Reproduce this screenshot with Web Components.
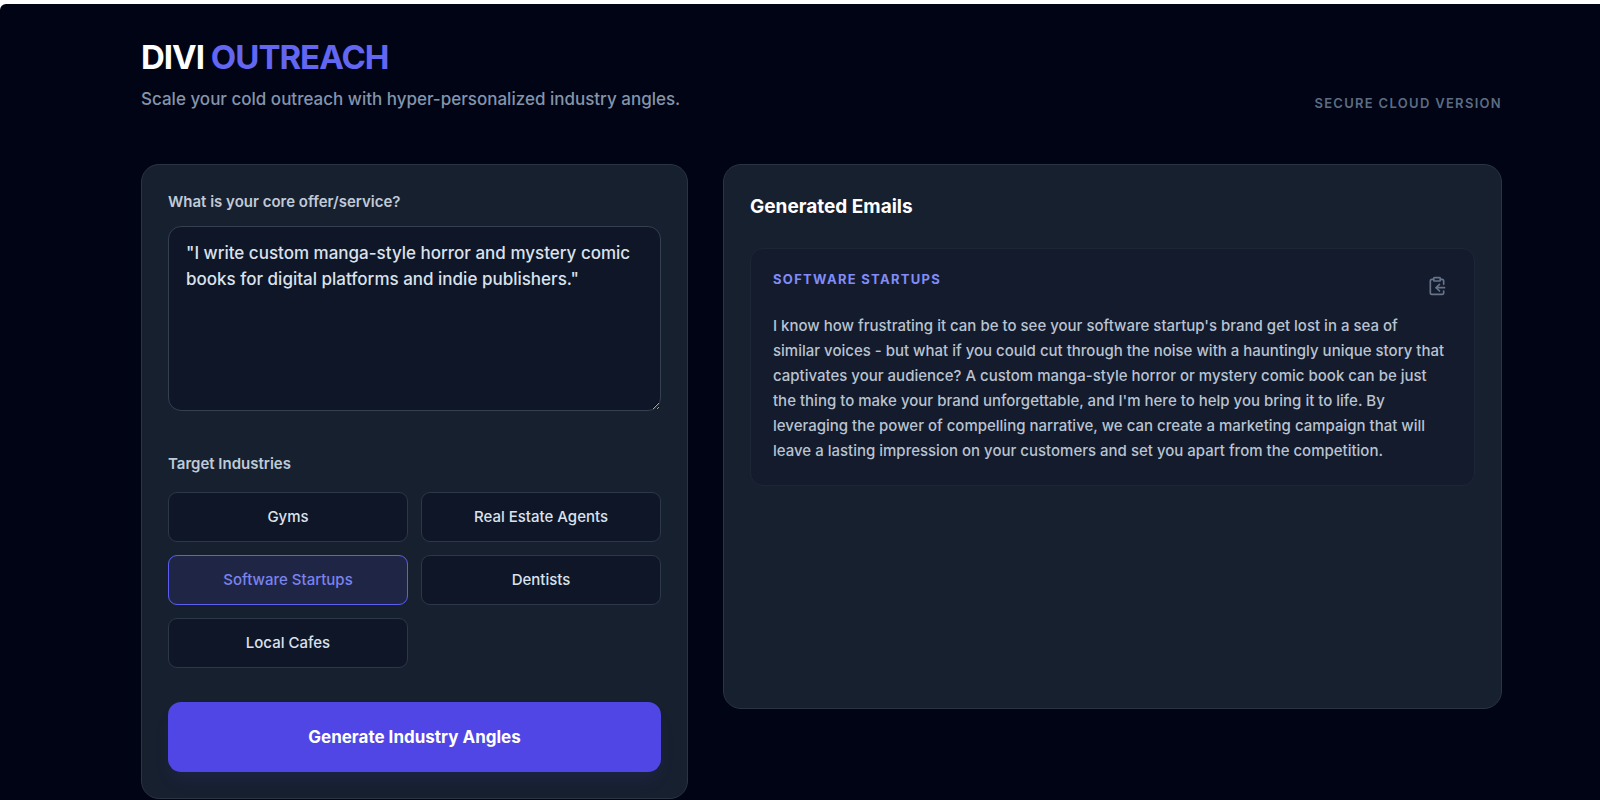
<!DOCTYPE html>
<html lang="en">
<head>
<meta charset="utf-8">
<meta name="viewport" content="width=device-width, initial-scale=1">
<title>Divi Outreach</title>
<style>
  html { background: #ffffff; }
  body {
    margin: 0;
    padding-top: 4px;
    font-family: Inter, "Liberation Sans", sans-serif;
    font-size: 15px;
    line-height: 24px;
    color: #dbe2ec;
    overflow: hidden;
  }
</style>
</head>
<body>
<outreach-app></outreach-app>

<script>
const define = (name, html, setup) => {
  const template = document.createElement('template');
  template.innerHTML = html;
  customElements.define(name, class extends HTMLElement {
    constructor() {
      super();
      this.attachShadow({ mode: 'open' }).append(template.content.cloneNode(true));
    }
    connectedCallback() {
      if (setup) setup(this, this.shadowRoot);
    }
  });
};

define('page-header', `
  <style>
    :host { display: block; }
    header { display: flex; justify-content: space-between; align-items: flex-end; }
    h1 { margin: 0 0 9px; font-size: 33px; line-height: 40px; font-weight: 700; letter-spacing: -1px; color: #fff; }
    .accent { color: #6366f1; }
    p { margin: 0; font-size: 17px; line-height: 27px; font-weight: 500; color: #8494ab; }
    .badge { font-size: 13px; line-height: 20px; font-weight: 600; letter-spacing: 0.1em; text-transform: uppercase; color: #5c6c83; }
  </style>
  <header>
    <div>
      <h1>DIVI <span class="accent">OUTREACH</span></h1>
      <p><slot name="tagline"></slot></p>
    </div>
    <div class="badge"><slot name="badge"></slot></div>
  </header>`);

define('panel-card', `
  <style>
    :host {
      display: block;
      box-sizing: border-box;
      padding: 26px;
      border: 1px solid #2b3443;
      border-radius: 18px;
      background: #17202f;
    }
  </style>
  <slot></slot>`);

define('offer-field', `
  <style>
    :host { display: block; }
    label { display: block; margin-bottom: 13px; font-size: 15px; line-height: 22px; font-weight: 600; color: #c0cad7; }
    textarea {
      display: block;
      box-sizing: border-box;
      width: 100%;
      height: 185px;
      margin: 0;
      padding: 13px 17px;
      border: 1px solid #343f50;
      border-radius: 13px;
      background: #0e1628;
      color: #dbe2ec;
      font: inherit;
      font-size: 17px;
      font-weight: 500;
      line-height: 26px;
      resize: vertical;
      outline: none;
    }
  </style>
  <label for="offer">What is your core offer/service?</label>
  <textarea id="offer">"I write custom manga-style horror and mystery comic books for digital platforms and indie publishers."</textarea>`);

define('industry-option', `
  <style>
    :host { display: block; }
    button {
      box-sizing: border-box;
      width: 100%;
      height: 50px;
      padding: 0 16px;
      border: 1px solid #2c3748;
      border-radius: 9px;
      background: #0e1628;
      color: #dbe2ec;
      font: inherit;
      font-weight: 500;
      cursor: pointer;
    }
    button[aria-pressed="true"] { border-color: #5b5ef0; background: #1f2645; color: #7b83ee; }
  </style>
  <button type="button" aria-pressed="false"><slot></slot></button>`,
  (host, root) => {
    const button = root.querySelector('button');
    const sync = () => button.setAttribute('aria-pressed', String(host.hasAttribute('selected')));
    button.addEventListener('click', () => { host.toggleAttribute('selected'); sync(); });
    sync();
  });

define('industry-picker', `
  <style>
    :host { display: block; }
    .title { margin: 0 0 17px; font-size: 15px; line-height: 22px; font-weight: 600; color: #c0cad7; }
    .grid { display: grid; grid-template-columns: 1fr 1fr; gap: 13px; }
  </style>
  <div role="group" aria-labelledby="title">
    <p class="title" id="title">Target Industries</p>
    <div class="grid"><slot></slot></div>
  </div>`);

define('primary-button', `
  <style>
    :host { display: block; }
    button {
      display: block;
      width: 100%;
      height: 70px;
      border: 0;
      border-radius: 13px;
      background: #4f46e5;
      color: #fff;
      font: inherit;
      font-size: 17px;
      font-weight: 700;
      box-shadow: 0 11px 17px -3px rgba(79, 70, 229, 0.1);
      cursor: pointer;
    }
  </style>
  <button type="button"><slot></slot></button>`);

define('email-card', `
  <style>
    :host {
      display: block;
      padding: 22px;
      border: 1px solid #1d2637;
      border-radius: 13px;
      background: #141b2c;
    }
    .head { display: flex; justify-content: space-between; align-items: flex-start; margin-bottom: 12px; }
    h3 { margin: 0; font-size: 13px; line-height: 16px; font-weight: 700; letter-spacing: 0.1em; text-transform: uppercase; color: #818cf8; }
    button { display: block; padding: 5px; border: 0; background: none; color: #64748b; cursor: pointer; }
    svg { display: block; width: 20px; height: 20px; }
    p { margin: 0; padding-right: 4px; font-size: 15px; line-height: 25px; font-weight: 500; color: #b9c3d1; }
  </style>
  <article>
    <div class="head">
      <h3><slot name="industry"></slot></h3>
      <button type="button" aria-label="Copy email">
        <svg viewBox="0 0 24 24" fill="none" stroke="currentColor" stroke-width="2" stroke-linecap="round" stroke-linejoin="round" aria-hidden="true">
          <rect x="8" y="2" width="8" height="4" rx="1"/>
          <path d="M8 4H6a2 2 0 0 0-2 2v14a2 2 0 0 0 2 2h12a2 2 0 0 0 2-2v-2"/>
          <path d="M16 4h2a2 2 0 0 1 2 2v4"/>
          <path d="M21 14H11"/>
          <path d="m15 10-4 4 4 4"/>
        </svg>
      </button>
    </div>
    <p><slot></slot></p>
  </article>`);

define('email-results', `
  <style>
    :host { display: block; min-height: 491px; }
    h2 { margin: 0 0 26px; font-size: 19px; line-height: 31px; font-weight: 700; color: #fff; }
  </style>
  <h2>Generated Emails</h2>
  <slot></slot>`);

define('outreach-app', `
  <style>
    :host {
      display: block;
      box-sizing: border-box;
      min-height: calc(100vh - 4px);
      padding: 33px 98px 0 141px;
      border-top-left-radius: 6px;
      background: #000414;
    }
    page-header { margin-bottom: 51px; }
    main { display: grid; grid-template-columns: minmax(0, 547fr) minmax(0, 779fr); gap: 35px; align-items: start; }
    industry-picker { margin: 42px 0 34px; }
  </style>
  <page-header>
    <span slot="tagline">Scale your cold outreach with hyper-personalized industry angles.</span>
    <span slot="badge">Secure Cloud Version</span>
  </page-header>
  <main>
    <panel-card>
      <offer-field></offer-field>
      <industry-picker>
        <industry-option>Gyms</industry-option>
        <industry-option>Real Estate Agents</industry-option>
        <industry-option selected>Software Startups</industry-option>
        <industry-option>Dentists</industry-option>
        <industry-option>Local Cafes</industry-option>
      </industry-picker>
      <primary-button>Generate Industry Angles</primary-button>
    </panel-card>
    <panel-card>
      <email-results>
        <email-card>
          <span slot="industry">Software Startups</span>
          I know how frustrating it can be to see your software startup's brand get lost in a sea of similar voices - but what if you could cut through the noise with a hauntingly unique story that captivates your audience? A custom manga-style horror or mystery comic book can be just the thing to make your brand unforgettable, and I'm here to help you bring it to life. By leveraging the power of compelling narrative, we can create a marketing campaign that will leave a lasting impression on your customers and set you apart from the competition.
        </email-card>
      </email-results>
    </panel-card>
  </main>`);
</script>
</body>
</html>
